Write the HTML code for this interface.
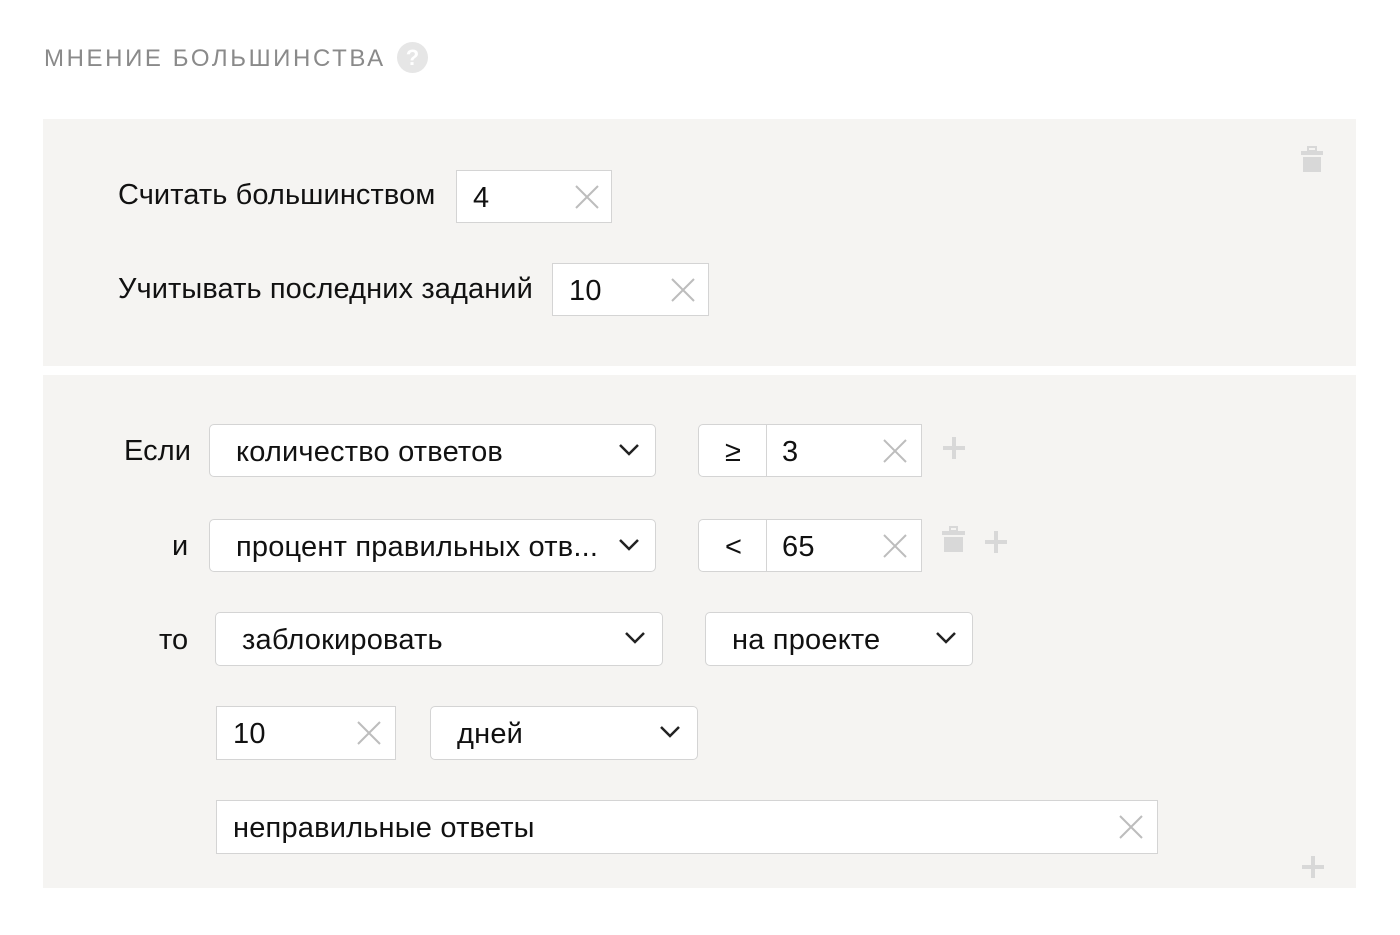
<!DOCTYPE html>
<html><head><meta charset="utf-8"><style>
body{margin:0;width:1400px;height:935px;background:#fff;font-family:"Liberation Sans",sans-serif;position:relative;overflow:hidden;color:#111}
.a{position:absolute}
.p{position:absolute;left:43px;width:1313px;background:#f5f4f2}
.t{position:absolute;font-size:29px;line-height:30px;white-space:nowrap;letter-spacing:0.1px}
.in{position:absolute;background:#fff;border:1px solid #d4d4d4;box-sizing:border-box;font-size:29px;letter-spacing:0.2px}
.in span{position:absolute;left:16px;top:12px;line-height:30px;white-space:nowrap}
.sel{border-radius:5px}
.sel span{left:26px}
.x{position:absolute;top:14px;width:24px;height:24px}
.ch{position:absolute;top:18px;width:20px;height:14px}
</style></head><body>
<div class="a" style="left:44px;top:44px;font-size:24px;letter-spacing:2.6px;color:#8a8a8a;line-height:30px">МНЕНИЕ БОЛЬШИНСТВА</div>
<div class="a" style="left:397px;top:42px;width:31px;height:31px;border-radius:50%;background:#e6e6e6;color:#fff;font-size:22px;font-weight:bold;text-align:center;line-height:31px">?</div>

<div class="p" style="top:119px;height:247px"></div>
<div class="p" style="top:375px;height:513px"></div>

<svg class="a" style="left:1300px;top:146px" width="25" height="27"><rect x="8" y="1" width="8" height="4" fill="none" stroke="#d8d8d8" stroke-width="2"/><rect x="1" y="5" width="22" height="4" fill="#d8d8d8"/><rect x="3" y="11" width="18" height="15" fill="#d8d8d8"/></svg>

<div class="t" style="left:118px;top:180px">Считать большинством</div>
<div class="in" style="left:456px;top:170px;width:156px;height:53px"><span>4</span><svg class="x" style="left:118px"><path d="M1 1L23 23M23 1L1 23" stroke="#bdbdbd" stroke-width="2"/></svg></div>
<div class="t" style="left:118px;top:274px">Учитывать последних заданий</div>
<div class="in" style="left:552px;top:263px;width:157px;height:53px"><span>10</span><svg class="x" style="left:118px"><path d="M1 1L23 23M23 1L1 23" stroke="#bdbdbd" stroke-width="2"/></svg></div>

<div class="t" style="left:124px;top:436px">Если</div>
<div class="in sel" style="left:209px;top:424px;width:447px;height:53px"><span>количество ответов</span><svg class="ch" style="left:409px"><path d="M1 2L10 11L19 2" fill="none" stroke="#222" stroke-width="2.5"/></svg></div>
<div class="in sel" style="left:698px;top:424px;width:224px;height:53px;border-radius:5px 0 0 5px"><span style="left:26px">≥</span><div class="a" style="left:67px;top:0;width:1px;height:51px;background:#d4d4d4"></div><span style="left:83px">3</span><svg class="x" style="left:184px"><path d="M1 1L23 23M23 1L1 23" stroke="#bdbdbd" stroke-width="2"/></svg></div>
<svg class="a" style="left:942px;top:436px" width="24" height="24"><path d="M12 1V23M1 12H23" stroke="#d8d8d8" stroke-width="4"/></svg>

<div class="t" style="left:172px;top:531px">и</div>
<div class="in sel" style="left:209px;top:519px;width:447px;height:53px"><span>процент правильных отв...</span><svg class="ch" style="left:409px"><path d="M1 2L10 11L19 2" fill="none" stroke="#222" stroke-width="2.5"/></svg></div>
<div class="in sel" style="left:698px;top:519px;width:224px;height:53px;border-radius:5px 0 0 5px"><span style="left:26px">&lt;</span><div class="a" style="left:67px;top:0;width:1px;height:51px;background:#d4d4d4"></div><span style="left:83px">65</span><svg class="x" style="left:184px"><path d="M1 1L23 23M23 1L1 23" stroke="#bdbdbd" stroke-width="2"/></svg></div>
<svg class="a" style="left:942px;top:526px" width="23" height="27"><rect x="8" y="1" width="7" height="4" fill="none" stroke="#d8d8d8" stroke-width="2"/><rect x="0" y="5" width="23" height="4" fill="#d8d8d8"/><rect x="2" y="11" width="19" height="15" fill="#d8d8d8"/></svg>
<svg class="a" style="left:984px;top:530px" width="24" height="24"><path d="M12 1V23M1 12H23" stroke="#d8d8d8" stroke-width="4"/></svg>

<div class="t" style="left:159px;top:625px">то</div>
<div class="in sel" style="left:215px;top:612px;width:448px;height:54px"><span>заблокировать</span><svg class="ch" style="left:409px"><path d="M1 2L10 11L19 2" fill="none" stroke="#222" stroke-width="2.5"/></svg></div>
<div class="in sel" style="left:705px;top:612px;width:268px;height:54px"><span>на проекте</span><svg class="ch" style="left:230px"><path d="M1 2L10 11L19 2" fill="none" stroke="#222" stroke-width="2.5"/></svg></div>

<div class="in" style="left:216px;top:706px;width:180px;height:54px"><span>10</span><svg class="x" style="left:140px"><path d="M1 1L23 23M23 1L1 23" stroke="#bdbdbd" stroke-width="2"/></svg></div>
<div class="in sel" style="left:430px;top:706px;width:268px;height:54px"><span>дней</span><svg class="ch" style="left:229px"><path d="M1 2L10 11L19 2" fill="none" stroke="#222" stroke-width="2.5"/></svg></div>

<div class="in" style="left:216px;top:800px;width:942px;height:54px"><span>неправильные ответы</span><svg class="x" style="left:902px"><path d="M1 1L23 23M23 1L1 23" stroke="#bdbdbd" stroke-width="2"/></svg></div>
<svg class="a" style="left:1301px;top:855px" width="24" height="24"><path d="M12 1V23M1 12H23" stroke="#d8d8d8" stroke-width="4"/></svg>
</body></html>
